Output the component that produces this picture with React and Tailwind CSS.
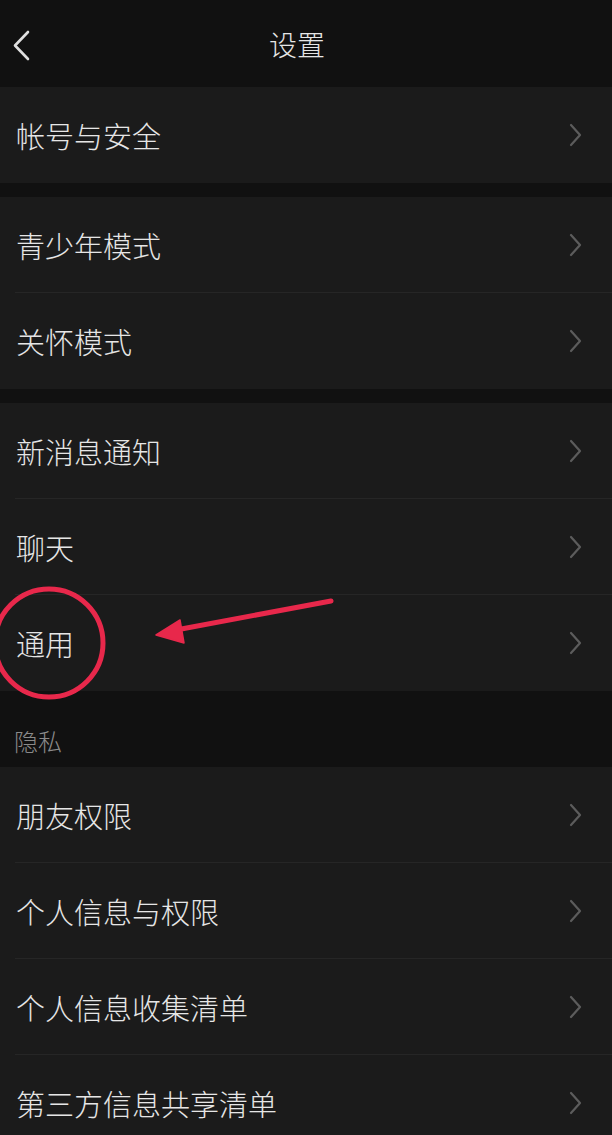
import React from "react";

const font = { fontFamily: '"Noto Sans CJK SC", "Noto Sans", sans-serif' };

function Chevron() {
  return (
    <svg width="14" height="24" viewBox="0 0 14 24" className="shrink-0">
      <path d="M3 2 L12 12 L3 22" fill="none" stroke="#5c5c5c" strokeWidth="2.2" strokeLinecap="round" strokeLinejoin="round" />
    </svg>
  );
}

function Row({ label, last }) {
  return (
    <div className="relative flex h-[96px] items-center justify-between pl-[16px] pr-[30px]">
      <span className="text-[29px] font-light leading-none text-[#e6e6e6]">{label}</span>
      <Chevron />
      {!last && <div className="absolute bottom-0 left-[15px] right-0 h-px bg-[#262626]" />}
    </div>
  );
}

function Group({ items }) {
  return (
    <div className="bg-[#1b1b1b]">
      {items.map((t, i) => (
        <Row key={t} label={t} last={i === items.length - 1} />
      ))}
    </div>
  );
}

export default function App() {
  return (
    <div className="relative h-[1135px] w-[612px] overflow-hidden bg-[#111111]" style={font}>
      <div className="relative flex h-[87px] items-center justify-center">
        <svg width="20" height="32" viewBox="0 0 20 32" className="absolute left-[11px] top-[30px]">
          <path d="M17 2 L4 15.5 L17 29" fill="none" stroke="#e0e0e0" strokeWidth="2.6" strokeLinecap="round" strokeLinejoin="round" />
        </svg>
        <span className="mr-[18px] text-[28px] font-light leading-none text-[#e6e6e6]">设置</span>
      </div>
      <Group items={["帐号与安全"]} />
      <div className="h-[14px]" />
      <Group items={["青少年模式", "关怀模式"]} />
      <div className="h-[14px]" />
      <Group items={["新消息通知", "聊天", "通用"]} />
      <div className="flex h-[76px] items-end pb-[14px] pl-[14px]">
        <span className="text-[24px] font-light leading-none text-[#8a8a8a]">隐私</span>
      </div>
      <Group items={["朋友权限", "个人信息与权限", "个人信息收集清单", "第三方信息共享清单"]} />

      <svg className="pointer-events-none absolute left-0 top-0" width="612" height="1135" viewBox="0 0 612 1135">
        <ellipse cx="49" cy="643" rx="54" ry="54" fill="none" stroke="#e8284b" strokeWidth="5" />
        <line x1="331" y1="601" x2="176" y2="630" stroke="#e8284b" strokeWidth="5" strokeLinecap="round" />
        <polygon points="156,635 180,620 184,643" fill="#e8284b" stroke="#e8284b" strokeWidth="1.5" strokeLinejoin="round" />
      </svg>
    </div>
  );
}
